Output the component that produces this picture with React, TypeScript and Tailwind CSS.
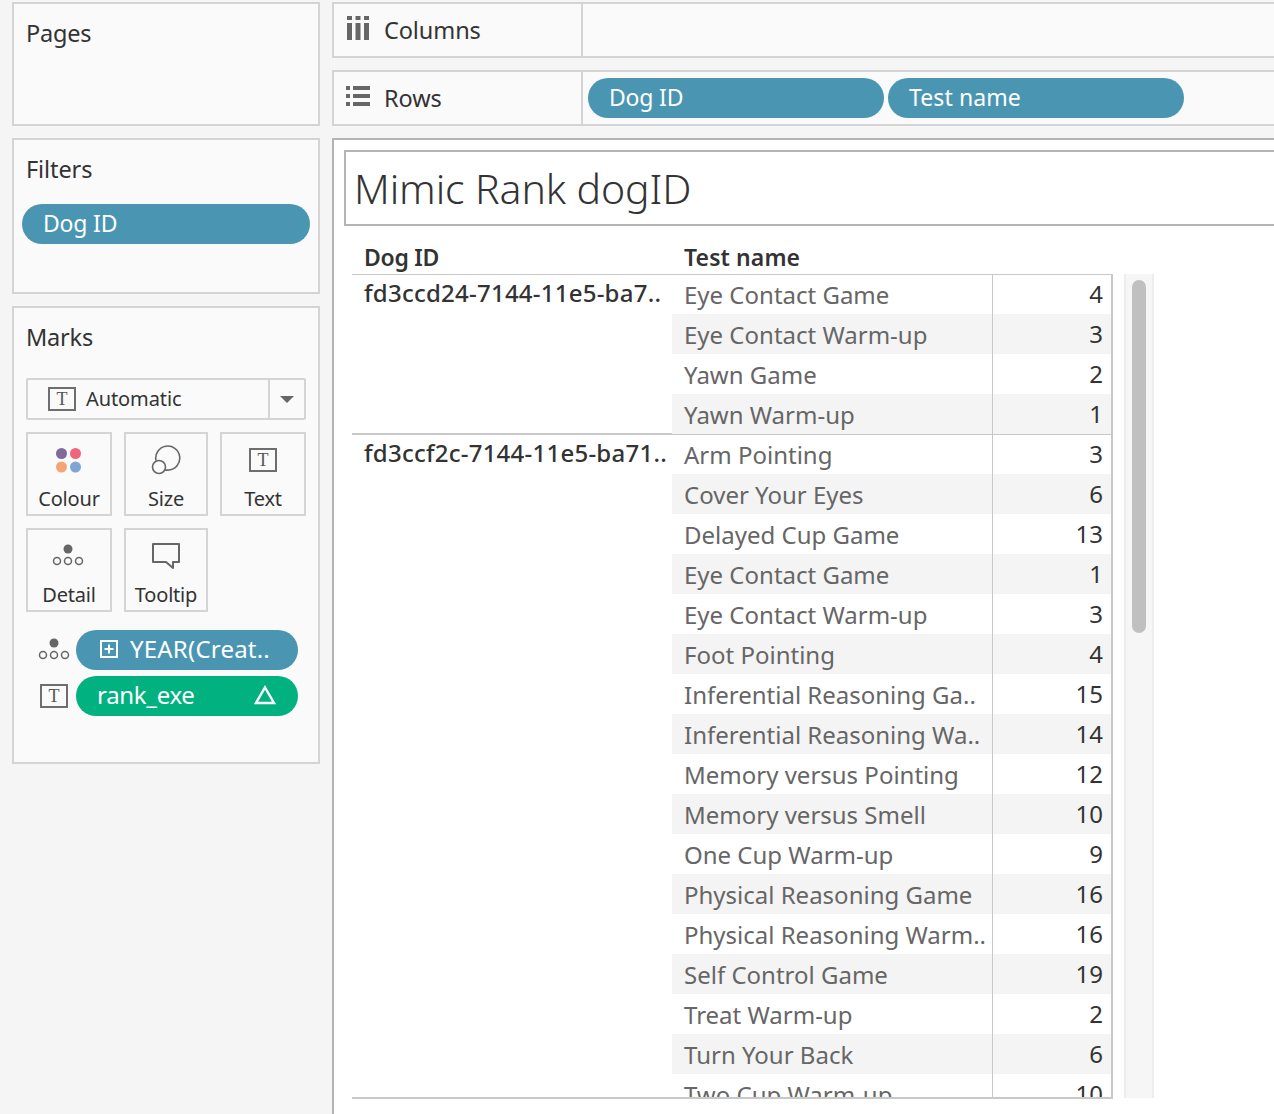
import React from "react";

const groups = [
  {
    id: "fd3ccd24-7144-11e5-ba7..",
    rows: [
      ["Eye Contact Game", 4],
      ["Eye Contact Warm-up", 3],
      ["Yawn Game", 2],
      ["Yawn Warm-up", 1],
    ],
  },
  {
    id: "fd3ccf2c-7144-11e5-ba71..",
    rows: [
      ["Arm Pointing", 3],
      ["Cover Your Eyes", 6],
      ["Delayed Cup Game", 13],
      ["Eye Contact Game", 1],
      ["Eye Contact Warm-up", 3],
      ["Foot Pointing", 4],
      ["Inferential Reasoning Ga..", 15],
      ["Inferential Reasoning Wa..", 14],
      ["Memory versus Pointing", 12],
      ["Memory versus Smell", 10],
      ["One Cup Warm-up", 9],
      ["Physical Reasoning Game", 16],
      ["Physical Reasoning Warm..", 16],
      ["Self Control Game", 19],
      ["Treat Warm-up", 2],
      ["Turn Your Back", 6],
      ["Two Cup Warm-up", 10],
    ],
  },
];

function TIcon() {
  return (
    <span
      className="flex h-6 w-[28px] items-center justify-center border-2 border-[#6e6e6e] bg-[#fafafa] text-[18px] leading-none text-[#555]"
      style={{ fontFamily: '"Liberation Serif", serif' }}
    >
      T
    </span>
  );
}

function DetailIcon({ className }: { className?: string }) {
  return (
    <svg width="32" height="24" viewBox="0 0 32 24" fill="none" className={className}>
      <circle cx="16" cy="5" r="4.5" fill="#666" />
      <circle cx="5" cy="17" r="3.5" stroke="#666" strokeWidth="1.5" />
      <circle cx="16" cy="17" r="3.5" stroke="#666" strokeWidth="1.5" />
      <circle cx="27" cy="17" r="3.5" stroke="#666" strokeWidth="1.5" />
    </svg>
  );
}

function MarkCard({ label, icon }: { label: string; icon: React.ReactNode }) {
  return (
    <div className="flex h-[84px] flex-col items-center border-2 border-[#d4d4d4]">
      <div className="flex h-[52px] items-center justify-center">{icon}</div>
      <span className="text-[20px] leading-[26px] tracking-[-0.2px] text-[#333]">{label}</span>
    </div>
  );
}

function Pill({ children, className }: { children: React.ReactNode; className: string }) {
  return (
    <div className={`flex h-10 items-center rounded-full pb-[2px] text-[23px] text-white ${className}`}>
      {children}
    </div>
  );
}

export default function App() {
  return (
    <div
      className="flex h-[1114px] w-[1274px] overflow-hidden bg-[#f5f5f5] pt-[2px] text-[#333]"
      style={{ fontFamily: '"Noto Sans", sans-serif' }}
    >
      {/* Left cards */}
      <div className="ml-3 flex w-[308px] shrink-0 flex-col gap-3">
        <div className="h-[124px] border-2 border-[#d4d4d4] bg-[#fafafa] pl-3 pt-[11px] text-[23.5px] leading-[36px] tracking-[-0.2px]">
          Pages
        </div>
        <div className="h-[156px] border-2 border-[#d4d4d4] bg-[#fafafa] pt-[11px]">
          <div className="pl-3 text-[23.5px] leading-[36px] tracking-[-0.1px]">Filters</div>
          <Pill className="ml-2 mt-[17px] w-[288px] bg-[#4a96b2] pl-[21px] tracking-[-0.2px]">Dog ID</Pill>
        </div>
        <div className="h-[458px] border-2 border-[#d4d4d4] bg-[#fafafa] pt-[11px]">
          <div className="pl-3 text-[23.5px] leading-[36px] tracking-[-0.2px]">Marks</div>
          <div className="ml-3 mt-[23px] flex h-[42px] w-[280px] items-center rounded-[2px] border-2 border-[#d4d4d4]">
            <div className="flex flex-1 items-center pl-[20px]">
              <TIcon />
              <span className="ml-[10px] text-[20px] tracking-[-0.1px]">Automatic</span>
            </div>
            <div className="flex h-full w-[36px] items-center justify-center border-l-2 border-[#d4d4d4]">
              <span className="h-0 w-0 border-x-[7px] border-t-[7px] border-x-transparent border-t-[#666]" />
            </div>
          </div>
          <div className="ml-3 mt-3 grid w-[280px] grid-cols-[86px_84px_86px] gap-3">
            <MarkCard
              label="Colour"
              icon={
                <svg width="28" height="28" viewBox="0 0 28 28" className="-ml-[3px]">
                  <circle cx="7.5" cy="7.5" r="5.5" fill="#80699b" />
                  <circle cx="21.5" cy="7.5" r="5.5" fill="#f0657c" />
                  <circle cx="7.5" cy="21" r="5.5" fill="#f2a675" />
                  <circle cx="21.5" cy="21" r="5.5" fill="#7fa6d2" />
                </svg>
              }
            />
            <MarkCard
              label="Size"
              icon={
                <svg width="30" height="30" viewBox="0 0 30 30" fill="none" stroke="#666" strokeWidth="1.6">
                  <path d="M5 15.5 A 12 12 0 1 1 18 25 A 12 12 0 0 1 14 25" />
                  <circle cx="8" cy="22" r="6.5" />
                </svg>
              }
            />
            <MarkCard label="Text" icon={<TIcon />} />
            <MarkCard label="Detail" icon={<DetailIcon className="-ml-[3px]" />} />
            <MarkCard
              label="Tooltip"
              icon={
                <svg width="30" height="28" viewBox="0 0 30 28" fill="none" stroke="#666" strokeWidth="2" strokeLinejoin="round">
                  <path d="M2 2 H28 V20 H22 V26 L15 20 H2 Z" />
                </svg>
              }
            />
          </div>
          <div className="mt-[18px] flex flex-col gap-[6px] pl-[24px]">
            <div className="flex items-center gap-[6px]">
              <DetailIcon />
              <Pill className="w-[222px] bg-[#4a96b2] pl-[24px]">
                <svg width="18" height="18" viewBox="0 0 18 18" fill="none" stroke="#fff" strokeWidth="2">
                  <rect x="1" y="1" width="16" height="16" />
                  <path d="M9 4.5 V13.5 M4.5 9 H13.5" />
                </svg>
                <span className="ml-[12px] text-[24px] tracking-[0.2px]">YEAR(Creat..</span>
              </Pill>
            </div>
            <div className="flex items-center gap-[6px]">
              <div className="flex w-[32px] justify-center">
                <TIcon />
              </div>
              <Pill className="w-[222px] justify-between bg-[#02b180] pl-[21px] pr-[22px]">
                <span className="text-[24px] tracking-[-0.3px]">rank_exe</span>
                <svg width="22" height="20" viewBox="0 0 22 20" fill="none" stroke="#fff" strokeWidth="2.4">
                  <path d="M11 2.5 L20 18 H2 Z" />
                </svg>
              </Pill>
            </div>
          </div>
        </div>
      </div>

      {/* Right side */}
      <div className="ml-3 flex min-w-0 flex-1 flex-col">
        <div className="flex h-[56px] border-y-2 border-l-2 border-[#d4d4d4] bg-[#fafafa]">
          <div className="flex w-[249px] items-center border-r-2 border-[#d4d4d4] pl-[13px]">
            <svg width="22" height="24" viewBox="0 0 22 24" fill="#666" className="-mt-[4px]">
              <rect x="0" y="7" width="5" height="17" />
              <rect x="8.5" y="7" width="5" height="17" />
              <rect x="17" y="7" width="5" height="17" />
              <rect x="0" y="0" width="5" height="4" />
              <rect x="8.5" y="0" width="5" height="4" />
              <rect x="17" y="0" width="5" height="4" />
            </svg>
            <span className="ml-[15px] mt-[2px] text-[23.5px] tracking-[-0.1px]">Columns</span>
          </div>
        </div>
        <div className="mt-3 flex h-[56px] border-y-2 border-l-2 border-[#d4d4d4] bg-[#fafafa]">
          <div className="flex w-[249px] items-center border-r-2 border-[#d4d4d4] pl-[12px]">
            <svg width="24" height="22" viewBox="0 0 24 22" fill="#666" className="-mt-[4px]">
              <rect x="0" y="1" width="4" height="4" />
              <rect x="7" y="1" width="17" height="4" />
              <rect x="0" y="9" width="4" height="4" />
              <rect x="7" y="9" width="17" height="4" />
              <rect x="0" y="17" width="4" height="4" />
              <rect x="7" y="17" width="17" height="4" />
            </svg>
            <span className="ml-[14px] mt-[2px] text-[23.5px] tracking-[-0.1px]">Rows</span>
          </div>
          <div className="flex items-center gap-1 pl-[5px]">
            <Pill className="w-[296px] bg-[#4a96b2] pl-[21px] tracking-[-0.2px]">Dog ID</Pill>
            <Pill className="w-[296px] bg-[#4a96b2] pl-[21px] tracking-[0.1px]">Test name</Pill>
          </div>
        </div>

        {/* View */}
        <div className="mt-3 flex-1 border-l-2 border-t-2 border-[#b4b4b4] bg-white pl-[10px] pt-[10px]">
          <div className="flex h-[76px] items-center border-y-2 border-l-2 border-[#b4b4b4] pl-[8px] pt-[2px] text-[41px] font-light tracking-[-0.1px]">
            Mimic Rank dogID
          </div>
          <div className="ml-[8px] mt-[18px] flex items-start">
            <div className="w-[761px]">
              <div className="flex h-[31px] items-center border-b border-[#c8c8c8] pb-[3px] text-[23px] font-semibold">
                <div className="w-[320px] pl-[12px] tracking-[-0.3px]">Dog ID</div>
                <div className="pl-[12px] tracking-[0.1px]">Test name</div>
              </div>
              <div className="h-[824px] overflow-hidden border-b-2 border-[#c8c8c8]">
                {groups.map((g, gi) => (
                  <div key={g.id} className={`flex ${gi > 0 ? "-mt-[1px] border-t-2 border-[#c8c8c8]" : ""}`}>
                    <div className="w-[320px] shrink-0 whitespace-nowrap pl-[12px] text-[24px] font-medium leading-[36px] tracking-[0.24px]">
                      {g.id}
                    </div>
                    <div className="flex-1">
                      {g.rows.map(([name, val], i) => (
                        <div
                          key={String(name) + i}
                          className={`flex items-center border-r-2 border-[#c8c8c8] text-[24px] text-[#666] ${i % 2 === 1 ? "bg-[#f4f4f4]" : ""} ${i === 0 ? "h-[39px]" : "h-10"}`}
                        >
                          <div
                            className={`h-full w-[321px] shrink-0 whitespace-nowrap border-r border-[#c8c8c8] pl-[12px] ${i === 0 ? "leading-10" : "leading-[42px]"}`}
                          >
                            {name}
                          </div>
                          <div className={`flex-1 pr-[8px] text-right text-[#333] ${i === 0 ? "pb-[2px]" : ""}`}>
                            {val}
                          </div>
                        </div>
                      ))}
                    </div>
                  </div>
                ))}
              </div>
            </div>
            <div className="ml-[11px] mt-[30px] h-[824px] w-[30px] border-x-2 border-[#ededed] bg-[#f6f6f6] px-[6px] pt-[6px]">
              <div className="h-[353px] rounded-full bg-[#c0c0c0]" />
            </div>
          </div>
        </div>
      </div>
    </div>
  );
}
